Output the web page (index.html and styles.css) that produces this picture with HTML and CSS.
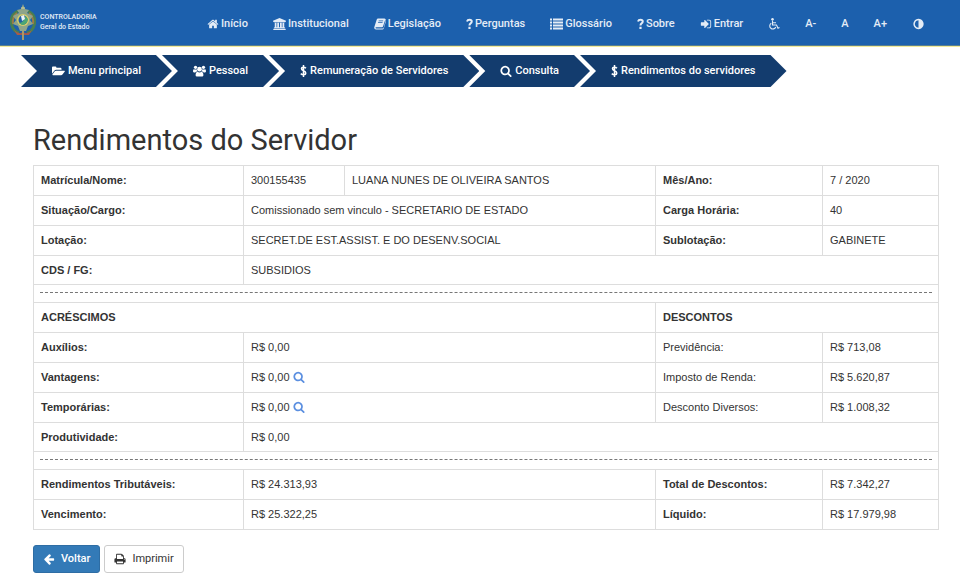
FILE: index.html
```html
<!DOCTYPE html>
<html lang="pt-BR">
<head>
<meta charset="utf-8">
<meta name="viewport" content="width=device-width, initial-scale=1">
<title>Rendimentos do Servidor</title>
<link rel="stylesheet" href="styles.css">
</head>
<body>
<svg class="sprite" aria-hidden="true">
  <symbol id="home" viewBox="0 0 1792 1792"><path d="M1472 992v480q0 26-19 45t-45 19h-384v-384h-256v384h-384q-26 0-45-19t-19-45v-480q0-1 .5-3t.5-3l575-474 575 474q1 2 1 6zm223-69l-62 74q-8 9-21 11h-3q-13 0-21-7l-692-577-692 577q-12 8-24 7-13-2-21-11l-62-74q-8-10-7-23.5t11-21.5l719-599q32-26 76-26t76 26l244 204v-195q0-14 9-23t23-9h192q14 0 23 9t9 23v408l219 182q10 8 11 21.5t-7 23.5z"/></symbol>
  <symbol id="bank" viewBox="0 0 26 24"><path d="M13 0L26 5.500V7.500H24.500Q24.500 8.500 23.500 8.500H2.500Q1.500 8.500 1.500 7.500H0V5.500ZM3.500 9.500H7V18.500H8.500V9.500H12V18.500H14V9.500H17.500V18.500H19V9.500H22.500V18.500Q24.500 18.500 24.500 20.500H1.500Q1.500 18.500 3.500 18.500ZM1.500 21.500H24.500L26 24H0Z"/></symbol>
  <symbol id="book" viewBox="0 0 24 24"><path fill-rule="evenodd" d="M8 1H21Q24 1.500 23.500 4L19.500 19Q19 21 17 21H4.500Q2.800 21 2.800 19.700Q3 18.500 4.500 18.500H16Q17.500 18.500 18 17L22 5Q24.500 6 23.500 8L19.500 21Q18.800 23 17 23H4Q0 22.500 .5 18.500L5.500 3Q6.200 1 8 1ZM9.500 5L9 6.500H18L18.500 5ZM8.300 8.500L7.800 10H16.800L17.300 8.500Z"/></symbol>
  <symbol id="list" viewBox="0 0 26 24"><path d="M0 1H4V5H0ZM6 1H26V5H6ZM0 7H4V11H0ZM6 7H26V11H6ZM0 13H4V17H0ZM6 13H26V17H6ZM0 19H4V23H0ZM6 19H26V23H6Z"/></symbol>
  <symbol id="question" viewBox="0 0 14 24"><path d="M2 7Q3 3.500 7 3.500Q11.500 3.500 11.500 7Q11.500 9.300 9.200 10.800Q7 12.200 7 15" fill="none" stroke="currentColor" stroke-width="4"/><path d="M4.800 17.500H9.200V22H4.800Z"/></symbol>
  <symbol id="dollar" viewBox="0 0 14 24"><path d="M12 6.500Q10 4.500 7 4.500Q3 4.500 3 7.700Q3 10.300 7 11.500Q11.500 12.900 11.500 16Q11.500 19.500 7 19.500Q4 19.500 1.500 17.200M7 0V24" fill="none" stroke="currentColor" stroke-width="3"/></symbol>
  <symbol id="signin" viewBox="0 0 1792 1792"><path d="M1312 896q0 26-19 45l-544 544q-19 19-45 19t-45-19-19-45v-288h-448q-26 0-45-19t-19-45v-384q0-26 19-45t45-19h448v-288q0-26 19-45t45-19 45 19l544 544q19 19 19 45zm352-352v704q0 119-84.500 203.500t-203.500 84.500h-320q-13 0-22.500-9.500t-9.500-22.500q0-4-1-20t-.5-26.500 3-23.500 10-19.500 20.500-6.500h320q66 0 113-47t47-113v-704q0-66-47-113t-113-47h-312l-11.500-1-11.500-3-8-5.500-7-9-2-13.500q0-4-1-20t-.5-26.500 3-23.500 10-19.500 20.500-6.500h320q119 0 203.500 84.500t84.500 203.500z"/></symbol>
  <symbol id="wheelchair" viewBox="0 0 24 24"><circle cx="9" cy="2.500" r="2.500"/><path d="M9 5V14H17L20 20.500L23 19.200M9.500 9.500H16M6.500 10.500A6.200 6.200 0 1 0 15.500 18" fill="none" stroke="currentColor" stroke-width="2.200"/></symbol>
  <symbol id="contrast" viewBox="0 0 1792 1792"><path d="M896 1440v-1088q-148 0-273 73t-198 198-73 273 73 273 198 198 273 73zm768-544q0 209-103 385.500t-279.500 279.500-385.500 103-385.500-103-279.500-279.500-103-385.500 103-385.500 279.500-279.500 385.500-103 385.500 103 279.500 279.500 103 385.500z"/></symbol>
  <symbol id="folder" viewBox="0 0 28 24"><path d="M0 18V4.500Q0 2.500 2 2.500H7.500Q9.500 2.500 9.500 4.500V5H18Q20.500 5 20.500 7.500V9.500H9Q6.500 9.500 5 11.500ZM8.500 11.300H26.500Q28.500 11.300 27.500 13L22.500 19.500Q21.500 21 19.500 21H2Q0 21 1.300 19.200L6 12.800Q7 11.300 8.500 11.300Z"/></symbol>
  <symbol id="users" viewBox="0 0 28 24"><circle cx="5.500" cy="4" r="3.500"/><circle cx="22.500" cy="4" r="3.500"/><circle cx="14" cy="8" r="5"/><path d="M2 8Q5 9.500 8 8Q8 11 10 13Q6 12.500 5 15H2Q0 15 0 12.500Q0 8 2 8ZM26 8Q23 9.500 20 8Q20 11 18 13Q22 12.500 23 15H26Q28 15 28 12.500Q28 8 26 8ZM9.500 13.500Q14 16.500 18.500 13.500Q22.500 14 22.500 20.500Q22.500 24 19.500 24H8.500Q5.500 24 5.500 20.500Q5.500 14 9.500 13.500Z"/></symbol>
  <symbol id="search" viewBox="0 0 1792 1792"><path d="M1216 832q0-185-131.500-316.500t-316.500-131.500-316.500 131.500-131.500 316.500 131.500 316.500 316.500 131.500 316.500-131.500 131.500-316.500zm512 832q0 52-38 90t-90 38q-54 0-90-38l-343-342q-179 124-399 124-143 0-273.500-55.500t-225-150-150-225-55.500-273.500 55.500-273.500 150-225 225-150 273.500-55.500 273.500 55.500 225 150 150 225 55.500 273.500q0 220-124 399l343 343q37 37 37 90z"/></symbol>
  <symbol id="back" viewBox="0 0 1792 1792"><path d="M1664 896v128q0 53-32.500 90.500t-84.500 37.500h-704l293 294q38 36 38 90t-38 90l-75 76q-37 37-90 37-52 0-91-37l-651-652q-37-37-37-90 0-52 37-91l651-650q38-38 91-38 52 0 90 38l75 74q38 38 38 91t-38 91l-293 293h704q52 0 84.500 37.500t32.500 90.500z"/></symbol>
  <symbol id="print" viewBox="0 0 1792 1792"><path d="M448 1536h896v-256h-896v256zm0-640h896v-384h-160q-40 0-68-28t-28-68v-160h-640v640zm1152 64q0-26-19-45t-45-19-45 19-19 45 19 45 45 19 45-19 19-45zm128 0v416q0 13-9.500 22.500t-22.500 9.500h-224v160q0 40-28 68t-68 28h-960q-40 0-68-28t-28-68v-160h-224q-13 0-22.500-9.500t-9.500-22.500v-416q0-79 56.500-135.500t135.500-56.500h64v-544q0-40 28-68t68-28h672q40 0 88 20t76 48l152 152q28 28 48 76t20 88v256h64q79 0 135.500 56.500t56.500 135.500z"/></symbol>
</svg>

<header class="topbar">
  <a class="brand" href="#">
    <svg class="crest" viewBox="0 0 26 36" aria-hidden="true">
      <path d="M8 7Q0 11 1.500 20Q3 27 9 29M18 7Q26 11 24.500 20Q23 27 17 29" fill="none" stroke="#477f52" stroke-width="3"/>
      <path d="M7 9Q2 13 3 20M19 9Q24 13 23 20" fill="none" stroke="#9b7c45" stroke-width="2"/>
      <path d="M4 26Q9 31 13 28Q17 31 22 26L19 31H7Z" fill="#a65b4c"/>
      <path d="M13 0L15 5L19 6L17 9L23 12L20 16L23 20L18 22L16 27H10L8 22L3 20L6 16L3 12L9 9L7 6L11 5Z" fill="#8fa58a"/>
      <path d="M13 27V36" stroke="#a89a68" stroke-width="2"/>
      <circle cx="13" cy="16" r="6" fill="#d8cf68"/>
      <circle cx="13" cy="16" r="4.500" fill="#1d5fa5"/>
      <path d="M9 19Q14 19 15 12L18 15Q17 21 12 21Z" fill="#4ca775"/>
      <path d="M11 12L14 11L15 15L12 17Z" fill="#eef4f4"/>
      <path d="M11 4H15" stroke="#ddd69a" stroke-width="1"/>
    </svg>
    <span class="brand-text"><span class="brand-name">CONTROLADORIA</span><span class="brand-sub">Geral do Estado</span></span>
  </a>
  <nav class="menu" aria-label="Principal">
    <a href="#"><svg class="icon"><use href="#home"/></svg>Início</a>
    <a href="#"><svg class="icon wide"><use href="#bank"/></svg>Institucional</a>
    <a href="#"><svg class="icon"><use href="#book"/></svg>Legislação</a>
    <a href="#"><svg class="icon thin"><use href="#question"/></svg>Perguntas</a>
    <a href="#"><svg class="icon wide"><use href="#list"/></svg>Glossário</a>
    <a href="#"><svg class="icon thin"><use href="#question"/></svg>Sobre</a>
    <a href="#"><svg class="icon"><use href="#signin"/></svg>Entrar</a>
    <a href="#" aria-label="Acessibilidade"><svg class="icon"><use href="#wheelchair"/></svg></a>
    <a href="#">A-</a>
    <a href="#">A</a>
    <a href="#">A+</a>
    <a href="#" aria-label="Contraste"><svg class="icon wide"><use href="#contrast"/></svg></a>
  </nav>
</header>

<nav class="crumbs" aria-label="Trilha">
  <a href="#"><svg class="icon wide"><use href="#folder"/></svg>Menu principal</a>
  <a href="#"><svg class="icon wide"><use href="#users"/></svg>Pessoal</a>
  <a href="#"><svg class="icon thin"><use href="#dollar"/></svg>Remuneração de Servidores</a>
  <a href="#"><svg class="icon"><use href="#search"/></svg>Consulta</a>
  <a href="#"><svg class="icon thin"><use href="#dollar"/></svg>Rendimentos do servidores</a>
</nav>

<main class="content">
  <h1>Rendimentos do Servidor</h1>
  <table class="sheet">
    <colgroup><col class="c-label"><col class="c-code"><col><col class="c-label2"><col class="c-value"></colgroup>
    <tbody>
      <tr><th scope="row">Matrícula/Nome:</th><td>300155435</td><td>LUANA NUNES DE OLIVEIRA SANTOS</td><th scope="row">Mês/Ano:</th><td>7 / 2020</td></tr>
      <tr><th scope="row">Situação/Cargo:</th><td colspan="2">Comissionado sem vinculo - SECRETARIO DE ESTADO</td><th scope="row">Carga Horária:</th><td>40</td></tr>
      <tr><th scope="row">Lotação:</th><td colspan="2">SECRET.DE EST.ASSIST. E DO DESENV.SOCIAL</td><th scope="row">Sublotação:</th><td>GABINETE</td></tr>
      <tr class="last"><th scope="row">CDS / FG:</th><td colspan="4">SUBSIDIOS</td></tr>
      <tr class="split"><td colspan="5"><hr></td></tr>
    </tbody>
    <tbody>
      <tr><th colspan="3">ACRÉSCIMOS</th><th colspan="2">DESCONTOS</th></tr>
      <tr><th scope="row">Auxílios:</th><td colspan="2">R$ 0,00</td><td>Previdência:</td><td>R$ 713,08</td></tr>
      <tr><th scope="row">Vantagens:</th><td colspan="2">R$ 0,00 <a class="detail" href="#" aria-label="Detalhar vantagens"><svg class="icon"><use href="#search"/></svg></a></td><td>Imposto de Renda:</td><td>R$ 5.620,87</td></tr>
      <tr><th scope="row">Temporárias:</th><td colspan="2">R$ 0,00 <a class="detail" href="#" aria-label="Detalhar temporárias"><svg class="icon"><use href="#search"/></svg></a></td><td>Desconto Diversos:</td><td>R$ 1.008,32</td></tr>
      <tr class="last"><th scope="row">Produtividade:</th><td colspan="4">R$ 0,00</td></tr>
      <tr class="split"><td colspan="5"><hr></td></tr>
    </tbody>
    <tbody>
      <tr><th scope="row">Rendimentos Tributáveis:</th><td colspan="2">R$ 24.313,93</td><th scope="row">Total de Descontos:</th><td>R$ 7.342,27</td></tr>
      <tr><th scope="row">Vencimento:</th><td colspan="2">R$ 25.322,25</td><th scope="row">Líquido:</th><td>R$ 17.979,98</td></tr>
    </tbody>
  </table>
  <div class="actions">
    <button class="btn primary" type="button"><svg class="icon"><use href="#back"/></svg>Voltar</button>
    <button class="btn" type="button"><svg class="icon"><use href="#print"/></svg>Imprimir</button>
  </div>
</main>
</body>
</html>
```
FILE: styles.css
```css
* { box-sizing: border-box; }

body {
  margin: 0;
  background: #fff;
  color: #333;
  font: 11px/16px "Liberation Sans", Arial, sans-serif;
}

a { color: inherit; text-decoration: none; }

.sprite { display: none; }

.icon {
  width: 12px;
  height: 12px;
  flex: none;
  fill: currentColor;
}
.icon.wide { width: 13px; }
.icon.thin { width: 7px; }

/* Top bar */
.topbar {
  display: flex;
  justify-content: space-between;
  padding: 2px 23px 0 10px;
  background: #1c60ad;
  border-bottom: 1px solid #f2eb9a;
  box-shadow: inset 0 -1px #5a7f91;
  color: #e4ecf6;
}

.brand {
  display: flex;
  align-items: center;
  gap: 4px;
  padding: 2px 0 6px;
}
.crest { width: 26px; height: 36px; }
.brand-text {
  display: flex;
  flex-direction: column;
  font: 500 7px/10px Roboto, "Liberation Sans", sans-serif;
}

.menu { display: flex; gap: 1px; }
.menu a {
  display: flex;
  align-items: center;
  gap: 2px;
  padding: 0 12px;
  font: 500 11px/16px Roboto, "Liberation Sans", sans-serif;
}

/* Breadcrumb arrows */
.crumbs {
  display: flex;
  padding: 8px 21px 0;
}
.crumbs a {
  display: flex;
  align-items: center;
  gap: 3px;
  height: 32px;
  padding: 0 31px;
  background: #133c6e;
  color: #fff;
  font: 500 11px/16px Roboto, "Liberation Sans", sans-serif;
  clip-path: polygon(0 0, calc(100% - 16px) 0, 100% 50%, calc(100% - 16px) 100%, 0 100%, 16px 50%);
}
.crumbs a + a { margin-left: -10px; }

/* Content */
.content { padding: 36px 21px 14px 33px; }

h1 {
  margin: 0 0 8px;
  font: 400 29px/34px Roboto, "Liberation Sans", sans-serif;
}

.sheet {
  width: 100%;
  table-layout: fixed;
  border-collapse: collapse;
}
.c-label { width: 210px; }
.c-code { width: 101px; }
.c-label2 { width: 167px; }
.c-value { width: 116px; }

.sheet th,
.sheet td {
  padding: 6px 7px 7px;
  border: 1px solid #ddd;
  text-align: left;
}
.sheet .last th,
.sheet .last td { padding: 6px 7px; }
.sheet .split td { padding: 7px 6px 9px; }
.sheet hr {
  margin: 0;
  border: 0;
  border-top: 1px dashed #777;
}

.detail { color: #5b8fe0; }
.detail .icon { vertical-align: -2px; }

.actions {
  display: flex;
  gap: 4px;
  margin-top: 15px;
}
.btn {
  display: flex;
  align-items: center;
  gap: 6px;
  height: 28px;
  padding: 0 9px;
  border: 1px solid #ccc;
  border-radius: 3px;
  background: #fff;
  color: #333;
  font: 11px/16px Roboto, "Liberation Sans", sans-serif;
}
.btn.primary {
  border-color: #2e6da4;
  background: #337ab7;
  color: #fff;
  font-weight: 500;
}
```
